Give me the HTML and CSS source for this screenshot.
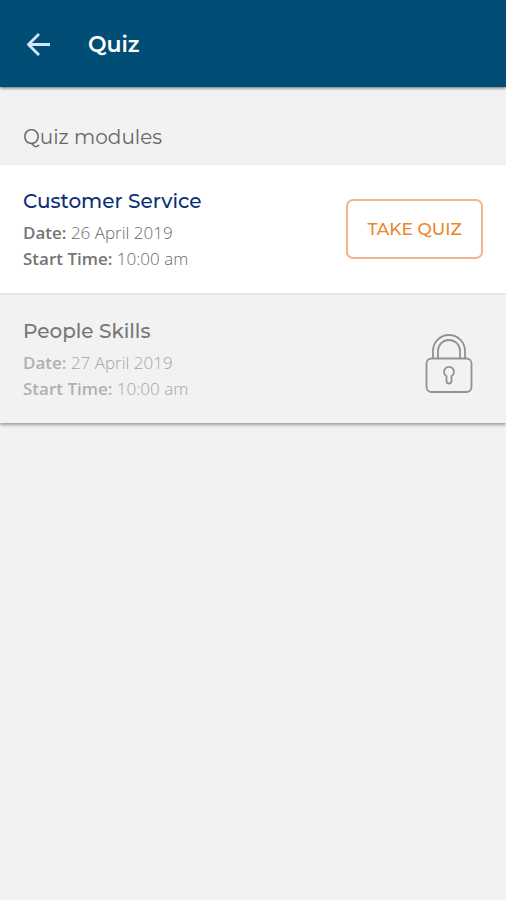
FILE: index.html
```html
<!DOCTYPE html>
<html lang="en">
<head>
<meta charset="utf-8">
<meta name="viewport" content="width=device-width, initial-scale=1">
<title>Quiz</title>
<link rel="stylesheet" href="styles.css">
</head>
<body>
<header class="app-bar">
  <button class="back" type="button" aria-label="Back">
    <svg width="24" height="24" viewBox="0 0 24 24" aria-hidden="true"><path d="M23 11.5H2M12 1L1.5 11.5L12 22"/></svg>
  </button>
  <h1 class="app-title">Quiz</h1>
</header>
<main>
  <h2 class="section-title">Quiz modules</h2>
  <ul class="modules">
    <li class="module">
      <div class="info">
        <h3 class="name">Customer Service</h3>
        <p class="detail"><b>Date:</b> 26 April 2019</p>
        <p class="detail"><b>Start Time:</b> 10:00 am</p>
      </div>
      <button class="take" type="button">TAKE QUIZ</button>
    </li>
    <li class="module locked">
      <div class="info">
        <h3 class="name">People Skills</h3>
        <p class="detail"><b>Date:</b> 27 April 2019</p>
        <p class="detail"><b>Start Time:</b> 10:00 am</p>
      </div>
      <svg class="lock" width="48" height="60" viewBox="0 0 48 60" role="img" aria-label="Locked">
        <rect x="1.5" y="25.5" width="45" height="33.5" rx="5"/>
        <path d="M8 25.5V18a16 16 0 0 1 32 0V25.5M13 25.5V18a11 11 0 0 1 22 0V25.5"/>
        <path d="M21.5 43.2a5 5 0 1 1 5 0V48a2.5 2.5 0 0 1-5 0Z"/>
      </svg>
    </li>
  </ul>
</main>
</body>
</html>
```
FILE: styles.css
```css
* {
  box-sizing: border-box;
}

body,
h1,
h2,
h3,
p,
ul {
  margin: 0;
  padding: 0;
}

body {
  min-height: 100vh;
  background: #f2f2f2;
  color: #666;
  font-family: "Open Sans", sans-serif;
}

.app-bar {
  display: flex;
  align-items: center;
  gap: 37px;
  padding: 29px 27px 26px;
  background: #004e76;
  box-shadow: 0 1px 3px rgba(0, 0, 0, 0.6);
}

.back {
  display: flex;
  padding: 0;
  border: 0;
  background: none;
  cursor: pointer;
}

.back svg {
  fill: none;
  stroke: #d5e6fa;
  stroke-width: 2.8;
}

.app-title,
.section-title,
.name,
.take {
  font-family: Montserrat, Inter, sans-serif;
}

.app-title {
  color: #fff;
  font-size: 22px;
  font-weight: 600;
  line-height: 32px;
}

.section-title {
  padding: 36px 23px 14px;
  font-size: 20px;
  font-weight: 400;
  line-height: 28px;
}

.modules {
  list-style: none;
  box-shadow: 0 2px 3px rgba(0, 0, 0, 0.35);
}

.module {
  display: flex;
  align-items: center;
  justify-content: space-between;
  padding: 21px 23px;
  background: #fff;
}

.name {
  margin-bottom: 4px;
  color: #0c2f76;
  font-size: 20px;
  font-weight: 500;
  line-height: 30px;
}

.detail {
  color: #6a6a6a;
  font-size: 17px;
  font-weight: 300;
  line-height: 26px;
}

.detail b {
  color: #757575;
  font-weight: 600;
}

.take {
  width: 137px;
  height: 60px;
  border: 2px solid #f3b48a;
  border-radius: 7px;
  background: #fff;
  color: #ed8529;
  font-size: 17px;
  font-weight: 500;
  cursor: pointer;
}

.locked {
  border-top: 2px solid #e6e6e6;
  background: #f2f2f2;
}

.locked .name {
  color: #777;
}

.locked .detail {
  color: #a4a4a4;
}

.locked .detail b {
  color: #b0b0b0;
}

.lock {
  margin: 8px 10px 0 0;
  fill: none;
  stroke: #929292;
  stroke-width: 1.8;
}
```
